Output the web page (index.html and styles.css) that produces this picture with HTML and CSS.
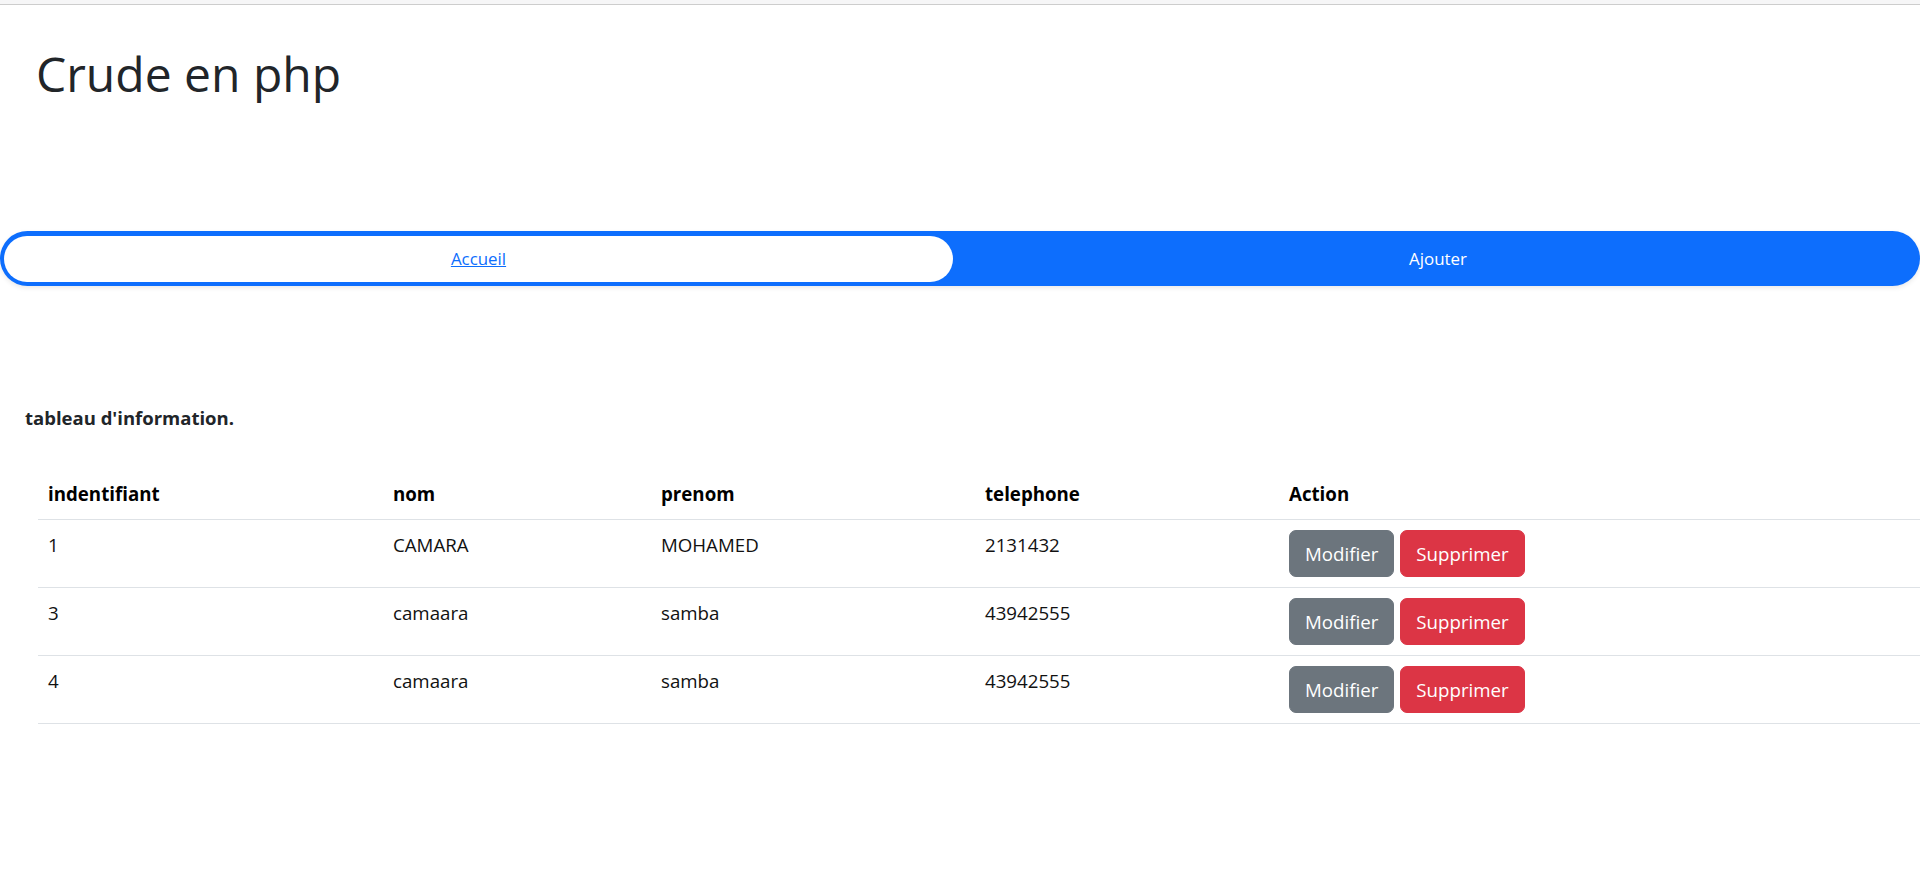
FILE: index.html
```html
<!DOCTYPE html>
<html lang="fr">
<head>
<meta charset="utf-8">
<title>Crude en php</title>
<link rel="stylesheet" href="styles.css">
</head>
<body>
<div class="topbar"></div>
<header class="site-header">
  <h1 class="title">Crude en php</h1>
</header>
<nav class="main-nav">
  <ul class="nav-pill">
    <li><a class="nav-link active" href="#">Accueil</a></li>
    <li><a class="nav-link" href="#">Ajouter</a></li>
  </ul>
</nav>
<main class="content">
  <p class="caption">tableau d'information.</p>
  <table class="data-table">
    <colgroup>
      <col class="col-id"><col class="col-nom"><col class="col-prenom"><col class="col-tel"><col class="col-action">
    </colgroup>
    <thead>
      <tr><th>indentifiant</th><th>nom</th><th>prenom</th><th>telephone</th><th>Action</th></tr>
    </thead>
    <tbody>
      <tr>
        <td>1</td><td>CAMARA</td><td>MOHAMED</td><td>2131432</td>
        <td><div class="actions"><a class="btn btn-secondary" href="#">Modifier</a><a class="btn btn-danger" href="#">Supprimer</a></div></td>
      </tr>
      <tr>
        <td>3</td><td>camaara</td><td>samba</td><td>43942555</td>
        <td><div class="actions"><a class="btn btn-secondary" href="#">Modifier</a><a class="btn btn-danger" href="#">Supprimer</a></div></td>
      </tr>
      <tr>
        <td>4</td><td>camaara</td><td>samba</td><td>43942555</td>
        <td><div class="actions"><a class="btn btn-secondary" href="#">Modifier</a><a class="btn btn-danger" href="#">Supprimer</a></div></td>
      </tr>
    </tbody>
  </table>
</main>
</body>
</html>
```
FILE: styles.css
```css
* { box-sizing: border-box; }

body {
  margin: 0;
  font-family: "Open Sans", "Noto Sans", sans-serif;
  color: #212529;
  background: #fff;
}

.topbar {
  height: 5px;
  background: #f6f6f7;
  border-bottom: 1px solid #cdcdcd;
}

.title {
  margin: 40px 0 0 36px;
  font-size: 48px;
  font-weight: 400;
  line-height: 1.2;
}

.main-nav {
  margin-top: 128px;
}

.nav-pill {
  list-style: none;
  margin: 0;
  padding: 5px 4px 4px;
  display: grid;
  grid-template-columns: 1fr 1fr;
  background: #0d6efd;
  border-radius: 999px;
  box-shadow: 0 2px 5px rgba(0, 0, 0, 0.09);
}

.nav-link {
  display: block;
  height: 46px;
  line-height: 46px;
  text-align: center;
  font-size: 16.9px;
  color: #fff;
  text-decoration: none;
  border-radius: 999px;
}

.nav-link.active {
  background: #fff;
  color: #0d6efd;
  text-decoration: underline;
  margin-right: 7px;
}

.caption {
  margin: 118px 0 0 25px;
  font-weight: 700;
  font-size: 18.5px;
  line-height: 1.5;
}

.data-table {
  margin: 38px 0 0 38px;
  width: calc(100% - 38px);
  border-collapse: collapse;
  table-layout: fixed;
  font-size: 18.7px;
  line-height: 30px;
}

.col-id { width: 345px; }
.col-nom { width: 268px; }
.col-prenom { width: 324px; }
.col-tel { width: 304px; }

.data-table th,
.data-table td {
  padding: 10px;
  text-align: left;
  vertical-align: top;
  border-bottom: 1px solid #dee2e6;
}

.data-table th {
  font-weight: 700;
  color: #000;
}

.data-table td {
  color: #111;
}

.actions {
  display: flex;
  gap: 6px;
}

.btn {
  display: inline-block;
  padding: 7.5px 15px;
  border: 1px solid transparent;
  border-radius: 7px;
  line-height: 30px;
  color: #fff;
  text-decoration: none;
}

.btn-secondary {
  background: #6c757d;
  border-color: #6c757d;
}

.btn-danger {
  background: #dc3545;
  border-color: #dc3545;
}
```
